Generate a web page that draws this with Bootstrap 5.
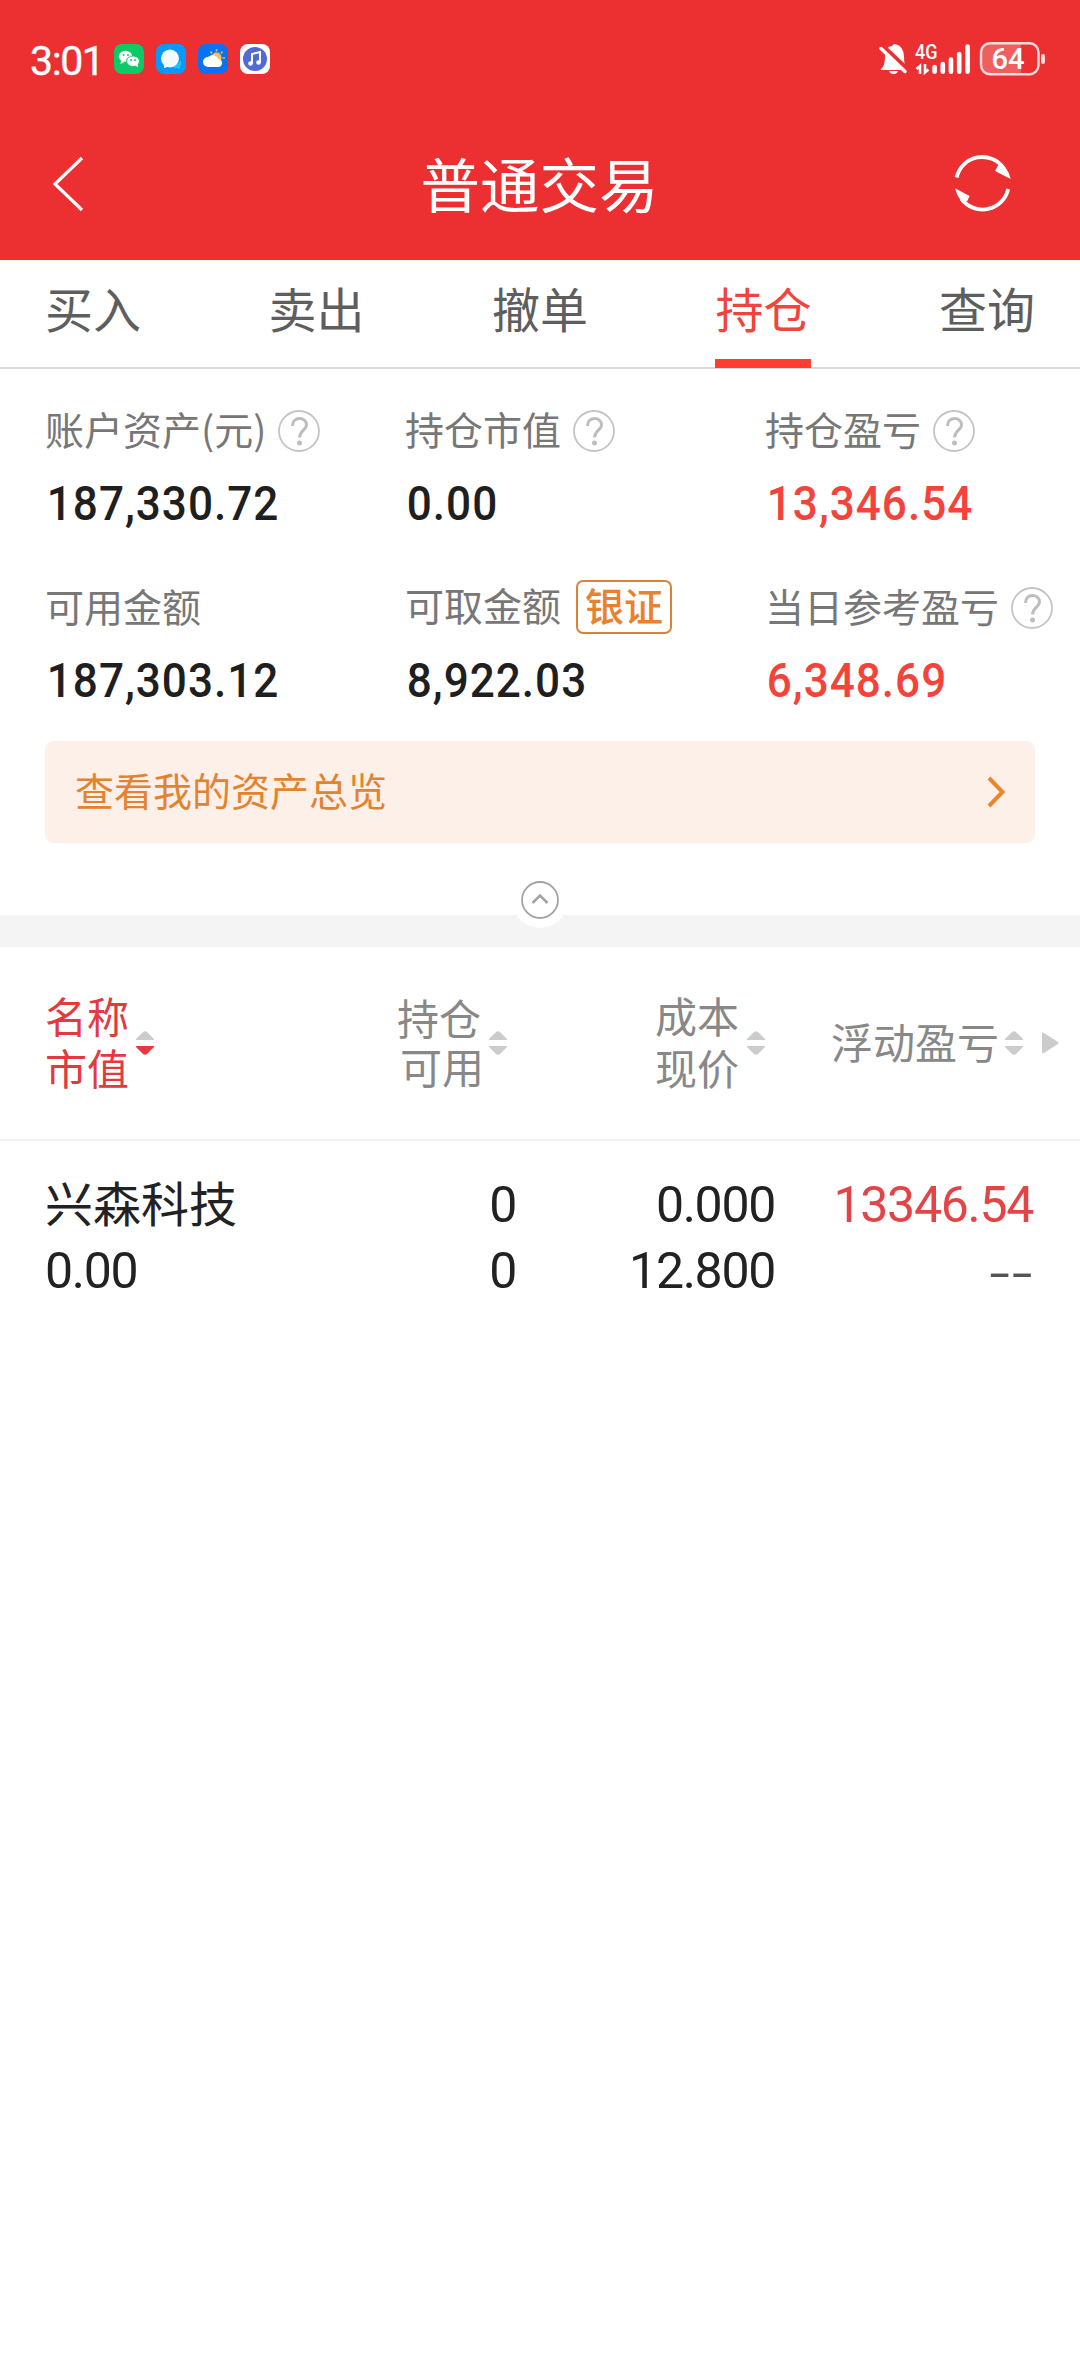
<!DOCTYPE html>
<html lang="zh-CN">
<head>
<meta charset="utf-8">
<meta name="viewport" content="width=device-width, initial-scale=1">
<title>普通交易</title>
<link href="https://cdn.jsdelivr.net/npm/bootstrap@5.3.0/dist/css/bootstrap.min.css" rel="stylesheet">
<style>
  body { font-family: "Noto Sans CJK SC", sans-serif; color: #222; background: #fff; line-height: 1; }
  svg { display: block; flex: none; }
  .topbar { background: #ec2f31; height: 260px; color: #fff; }
  .status { height: 118px; padding: 0 34px 0 30px; }
  .clock { font: 400 41px/40px Roboto, sans-serif; width: 84px; letter-spacing: -1.4px; padding-top: 3px; -webkit-text-stroke: .4px #fff; }
  .titlebar { height: 132px; padding: 0 67px 0 52px; }
  .page-title { font-size: 59.5px; line-height: 60px; font-weight: 400; padding: 0 0 4px 12px; }
  .tabs { height: 109px; padding: 0 45px; border-bottom: 2px solid #d9d9d9; }
  .tabs .nav-link { padding: 0; font-size: 48px; line-height: 94px; height: 108px; color: #5e5e5e; border-radius: 0; }
  .tabs .nav-link.active { color: #f0453a; border-bottom: 9px solid #ff3d30; }
  .stats { padding: 35px 0 0 45px; height: 372px; }
  .stat { width: 360px; height: 177px; flex: none; }
  .stat-last { width: 315px; }
  .stat-label { height: 54px; font-size: 39px; line-height: 47px; color: #777; gap: 12px; white-space: nowrap; }
  .stat-label > span:first-child { padding-bottom: 5px; }
  .stat-num { font: 500 49px/50px Roboto, sans-serif; letter-spacing: 1.1px; color: #1f1f1f; transform: scaleX(.9); transform-origin: 0 50%; margin-top: 21px; padding-left: 2px; }
  .gain { color: #f4433a; }
  .bank { border: 2px solid #dc8237; border-radius: 7px; color: #e8822f; font-weight: 500; width: 96px; height: 54px; line-height: 45px; margin: -2px 0 0 3px; }
  .overview { margin: 0 45px; height: 102px; border-radius: 8px; background: #fcf0e8; color: #e4832f; font-size: 39px; padding: 0 30px; }
  .overview span { padding-bottom: 5px; }
  .band { height: 32px; margin-top: 72px; background: #f4f4f4; position: relative; }
  .fold { position: absolute; left: 512px; top: -43px; width: 56px; height: 56px; border-radius: 50%; background: #fff; }
  .thead-row { height: 194px; border-bottom: 2px solid #f2f2f2; font-size: 42px; line-height: 52px; color: #888; }
  .head-text { padding-bottom: 4px; }
  .head-tight { padding-bottom: 5px; line-height: 49px; }
  .sorter { gap: 6px; color: #ccc; }
  .on { color: #e23a3f; }
  .c1 { width: 300px; padding-left: 45px; }
  .c2 { width: 216px; }
  .c3 { width: 259px; }
  .c4 { width: 258px; }
  .trow { font-size: 48px; color: #222; padding-top: 30px; }
  .digits { font-family: Roboto, sans-serif; font-size: 50px; letter-spacing: -1.3px; }
  .trow .line { line-height: 68px; height: 66px; }
  .trow .stock { line-height: 60px; }
  .dash { display: inline-block; transform: scaleX(1.5); transform-origin: 100% 50%; color: #555; font-family: "Open Sans", sans-serif; font-size: 48px; line-height: 62px; letter-spacing: -.4px; }
</style>
</head>
<body>
<svg width="0" height="0" class="position-absolute">
  <symbol id="help" viewBox="0 0 42 42"><circle cx="21" cy="21" r="20" fill="none" stroke="#c4c4c4" stroke-width="1.8"/><path d="M14.500 16C14.500 6 28.500 6.500 28.500 15C28.500 20 21.500 20.500 21.500 27.500" fill="none" stroke="#bdbdbd" stroke-width="3"/><circle cx="21.500" cy="33" r="2.500" fill="#bdbdbd"/></symbol>
  <symbol id="up" viewBox="0 0 18 9"><path d="M0 9L0 8L7 1Q9-.5 11 1L18 8V9Z" fill="currentColor"/></symbol>
  <symbol id="down" viewBox="0 0 18 9"><path d="M0 0V1L7 8Q9 9.500 11 8L18 1V0Z" fill="currentColor"/></symbol>
</svg>

<header class="topbar">
  <div class="status d-flex align-items-center">
    <span class="clock">3:01</span>
    <div class="d-flex" style="gap:12px">
      <svg width="30" height="30"><rect width="30" height="30" rx="8" fill="#0ccb67"/><ellipse cx="11.500" cy="12.300" rx="6.700" ry="5.500" fill="#fff"/><path d="M7 16l-.5 4 4-2z" fill="#fff"/><ellipse cx="19" cy="17.200" rx="6.500" ry="5.300" fill="#fff" stroke="#0ccb67" stroke-width="1"/><path d="M21 21l3 2.500-.5-4z" fill="#fff"/><g fill="#0ccb67"><circle cx="9.500" cy="11" r="1"/><circle cx="14" cy="11" r="1"/><circle cx="17" cy="16" r="1"/><circle cx="21" cy="16" r="1"/></g></svg>
      <svg width="30" height="30"><rect width="30" height="30" rx="8" fill="#0a98fb"/><path d="M16 21c5 0 8-2 8-5 2 2 1.500 5 .3 6l-.3 3-3-1c-2 .5-5-.5-5-3z" fill="#19c3fb"/><circle cx="14" cy="14.500" r="9" fill="#f2faff"/><path d="M8 19v5l5-1.500z" fill="#f2faff"/></svg>
      <svg width="30" height="30"><rect width="30" height="30" rx="8" fill="#0872f5"/><g stroke="#eebb4b" stroke-width="1.500"><path d="M18.500 5v2.500M12.500 7.500l1.500 2M24.500 7.500L23 9.500M27 14h-2.500"/></g><circle cx="18.500" cy="13.500" r="5" fill="#fcc34b"/><path d="M10 23a5 5 0 010-10 6 6 0 0110 2 4 4 0 010 8z" fill="#fff"/></svg>
      <svg width="30" height="30"><rect width="30" height="30" rx="8" fill="#fff"/><circle cx="15" cy="15" r="12" fill="#5269d6"/><path d="M12 19.500V10l8-2v10.500" fill="none" stroke="#fff" stroke-width="2"/><circle cx="10.500" cy="19.500" r="2.300" fill="#fff"/><circle cx="18.500" cy="18.500" r="2.300" fill="#fff"/></svg>
    </div>
    <svg class="ms-auto" width="168" height="36" viewBox="878 41 168 36" fill="#fff">
      <path d="M882 68Q885 65 885 56Q885 46 892 46Q893 44 895 44Q904 46 904 57Q904 65 907 70H881Q880 69 882 68Z"/><path d="M889 71h9q-1 3-4.500 3t-4.500-3z"/><path d="M880 44.500L908 71" stroke="#ec2f31" stroke-width="6"/><path d="M881 48.500L905 71.500" stroke="#fff" stroke-width="3.500" stroke-linecap="round"/>
      <text x="915" y="59" font-family="Roboto" font-weight="500" font-size="20" textLength="22.500" lengthAdjust="spacingAndGlyphs">4G</text>
      <path d="M920 74V66L916.500 69M925 64V72.500L928.500 69.500" fill="none" stroke="#fff" stroke-width="2.600"/>
      <g stroke="#fff" stroke-width="4.600" stroke-linecap="round"><path d="M934.600 67V71.800M942.800 64V71.800M951 59.500V71.800M959.200 54V71.800M967.600 46.500V71.800"/></g>
      <path d="M989 44H1021V74H989Q982 74 982 67V51Q982 44 989 44Z" fill-opacity=".23"/>
      <rect x="981" y="43.200" width="57.500" height="31" rx="9" fill="none" stroke="#fbdcdc" stroke-width="2.400"/>
      <rect x="1041" y="54" width="4" height="10" rx="2" fill="#fbdcdc"/>
      <text x="991.500" y="69" font-family="Roboto" font-weight="500" font-size="29" textLength="33" lengthAdjust="spacingAndGlyphs">64</text>
    </svg>
  </div>
  <div class="titlebar d-flex align-items-center justify-content-between">
    <svg width="62" height="56" viewBox="0 0 62 56"><path d="M30 2L3 28L30 54" fill="none" stroke="#fff" stroke-width="3.200"/></svg>
    <h1 class="page-title m-0">普通交易</h1>
    <svg width="60" height="60" viewBox="0 0 60 60" fill="none" stroke="#fff" stroke-width="3.800"><path d="M3.600 23.500A26.300 26.300 0 0151 14.500M55.200 35A26.300 26.300 0 018.500 45"/><path d="M57.700 25L42 17L45.300 11L52.500 13.500Q56 18 57.700 25ZM2 34.300L16.600 42L14.300 47L7.500 46Q3.500 41 2 34.300Z" fill="#fff" stroke="none"/></svg>
  </div>
</header>

<nav class="tabs nav flex-nowrap justify-content-between">
  <a class="nav-link">买入</a><a class="nav-link">卖出</a><a class="nav-link">撤单</a><a class="nav-link active">持仓</a><a class="nav-link">查询</a>
</nav>

<main>
  <section class="stats d-flex flex-wrap align-content-start">
    <div class="stat"><div class="stat-label d-flex align-items-center"><span>账户资产(元)</span><svg width="42" height="42"><use href="#help"/></svg></div><div class="stat-num">187,330.72</div></div>
    <div class="stat"><div class="stat-label d-flex align-items-center"><span>持仓市值</span><svg width="42" height="42"><use href="#help"/></svg></div><div class="stat-num">0.00</div></div>
    <div class="stat stat-last"><div class="stat-label d-flex align-items-center"><span>持仓盈亏</span><svg width="42" height="42"><use href="#help"/></svg></div><div class="stat-num gain">13,346.54</div></div>
    <div class="stat"><div class="stat-label d-flex align-items-center"><span>可用金额</span></div><div class="stat-num">187,303.12</div></div>
    <div class="stat"><div class="stat-label d-flex align-items-center"><span class="pb-2">可取金额</span><span class="bank text-center">银证</span></div><div class="stat-num">8,922.03</div></div>
    <div class="stat stat-last"><div class="stat-label d-flex align-items-center"><span>当日参考盈亏</span><svg width="42" height="42"><use href="#help"/></svg></div><div class="stat-num gain">6,348.69</div></div>
  </section>

  <a class="overview d-flex align-items-center justify-content-between text-decoration-none"><span>查看我的资产总览</span>
    <svg width="18" height="32" viewBox="0 0 18 32"><path d="M2 2L15.500 16L2 30" fill="none" stroke="#ec862d" stroke-width="4"/></svg>
  </a>

  <div class="band"><div class="fold"><svg width="56" height="56" fill="none" stroke="#a3a3a3"><circle cx="28" cy="28" r="18" stroke-width="1.800"/><path d="M20.500 31L28 23.500L35.500 31" stroke-width="2.600"/></svg></div></div>

  <section>
    <div class="thead-row d-flex align-items-center">
      <div class="c1 d-flex align-items-center on" style="gap:7px"><div class="head-text">名称<br>市值</div><div class="sorter d-grid"><svg width="18" height="9"><use href="#up"/></svg><svg class="on" width="18" height="9"><use href="#down"/></svg></div></div>
      <div class="c2 d-flex align-items-center justify-content-end" style="gap:5px;padding-right:9px"><div class="head-tight"><div style="margin-left:-3px">持仓</div><div>可用</div></div><div class="sorter d-grid"><svg width="18" height="9"><use href="#up"/></svg><svg width="18" height="9"><use href="#down"/></svg></div></div>
      <div class="c3 d-flex align-items-center justify-content-end" style="gap:8px;padding-right:10px"><div class="head-text">成本<br>现价</div><div class="sorter d-grid"><svg width="18" height="9"><use href="#up"/></svg><svg width="18" height="9"><use href="#down"/></svg></div></div>
      <div class="c4 d-flex align-items-center justify-content-end" style="gap:6px;padding-right:10px"><div class="head-text">浮动盈亏</div><div class="sorter d-grid"><svg width="18" height="9"><use href="#up"/></svg><svg width="18" height="9"><use href="#down"/></svg></div></div>
      <svg style="margin-left:9px" width="17" height="22"><path d="M0 1.500Q0 0 2 1L16 10Q17 11 16 12L2 21Q0 22 0 20Z" fill="#ccc"/></svg>
    </div>
    <div class="trow d-flex">
      <div class="c1"><div class="line stock">兴森科技</div><div class="line digits">0.00</div></div>
      <div class="c2 text-end digits"><div class="line">0</div><div class="line">0</div></div>
      <div class="c3 text-end digits"><div class="line">0.000</div><div class="line">12.800</div></div>
      <div class="c4 text-end digits"><div class="line" style="color:#e34448">13346.54</div><div class="line"><span class="dash">--</span></div></div>
    </div>
  </section>
</main>
<script src="https://cdn.jsdelivr.net/npm/bootstrap@5.3.0/dist/js/bootstrap.bundle.min.js"></script>
</body>
</html>
